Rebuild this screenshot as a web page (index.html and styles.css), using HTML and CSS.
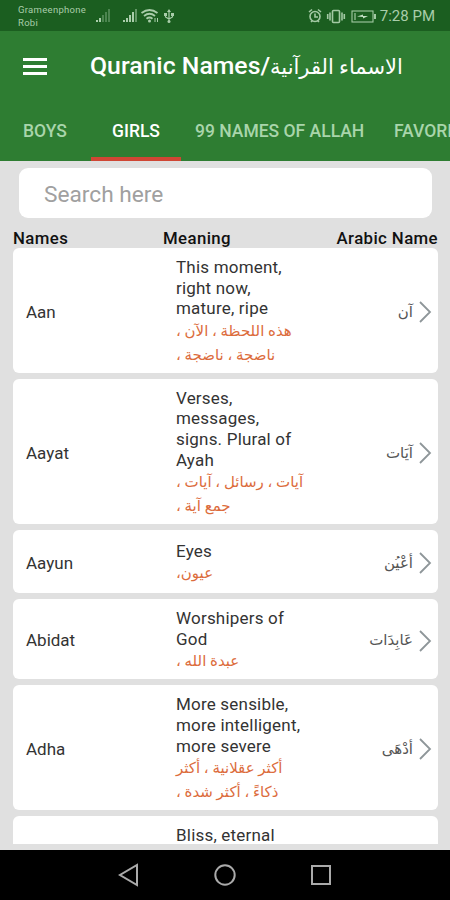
FILE: index.html
```html
<!DOCTYPE html>
<html lang="en">
<head>
    <meta charset="UTF-8">
    <meta name="viewport" content="width=device-width, initial-scale=1.0">
    <title>Quranic Names</title>
    <link rel="stylesheet" href="styles.css">
</head>
<body>
    <div class="status-bar">
        <div class="carrier">Grameenphone<br>Robi</div>
        <svg class="status-left" width="80" height="16" viewBox="0 0 80 16">
            <g fill="#a9cdaa">
                <rect x="1" y="12" width="2" height="2"/>
                <rect x="4" y="10" width="2" height="4"/>
                <g opacity="0.35">
                    <rect x="7" y="7" width="2" height="7"/>
                    <rect x="10" y="4" width="2" height="10"/>
                    <rect x="13" y="1" width="2" height="13"/>
                </g>
                <rect x="28" y="12" width="2" height="2"/>
                <rect x="31" y="10" width="2" height="4"/>
                <rect x="34" y="7" width="2" height="7"/>
                <rect x="37" y="4" width="2" height="10"/>
                <rect x="40" y="1" width="2" height="13" opacity="0.5"/>
                <circle cx="54.500" cy="13" r="1.500"/>
                <circle cx="74" cy="13.500" r="1.500"/>
                <path d="M72 4l2-3 2 3zM69 5h3v3h-3zM76 5h3v3h-3z"/>
            </g>
            <g fill="none" stroke="#a9cdaa" stroke-width="1.800">
                <path d="M46.500 5q8-6 16 0M49 8q5.500-4.500 11 0M51.500 10.800q3-2.500 6 0"/>
                <path d="M60 10v4M62.500 10v4" stroke-width="1"/>
                <path d="M74 3v10M70.500 7v2l3.500 2 3.500-2V7" stroke-width="1.200"/>
            </g>
        </svg>
        <svg class="status-right" width="70" height="16" viewBox="0 0 70 16" fill="none" stroke="#a3c9a4" stroke-width="1.600">
            <circle cx="8" cy="8.500" r="5"/>
            <path d="M8 5.500V9h3M2 4l3-2.500M14 4l-3-2.500M4 14l1.500-1.500M12 14l-1.500-1.500"/>
            <rect x="25.500" y="2.500" width="7" height="12" rx="1"/>
            <path d="M23 4.500v8M35 4.500v8M20.700 6v5M37.300 6v5"/>
            <rect x="45" y="3" width="21" height="11" stroke-width="1.100"/>
            <path d="M68 6v5" stroke-width="2"/>
            <path d="M47 5h2v7h-2z" fill="#a3c9a4" stroke="none" opacity="0.6"/>
            <path d="M50 8.500l6-2v1.500h5l-5 2.500V9z" fill="#c3dfc4" stroke="none"/>
        </svg>
        <div class="clock">7:28 PM</div>
    </div>
    <div class="toolbar">
        <svg class="menu-icon" width="24" height="17" viewBox="0 0 24 17" fill="#fff">
            <path d="M0 0h24v3H0zM0 7h24v3H0zM0 14h24v3H0z"/>
        </svg>
        <h1>Quranic Names/<span class="title-ar" lang="ar" dir="rtl">الاسماء القرآنية</span></h1>
    </div>
    <div class="tabs">
        <div class="tab tab-boys">BOYS</div>
        <div class="tab tab-girls active">GIRLS</div>
        <div class="tab tab-allah">99 NAMES OF ALLAH</div>
        <div class="tab">FAVORITES</div>
    </div>
    <div class="content">
        <input class="search" type="text" placeholder="Search here">
        <div class="list-header">
            <span class="col-names">Names</span>
            <span class="col-meaning">Meaning</span>
            <span class="col-arabic">Arabic Name</span>
        </div>
        <div class="list">
            <div class="card">
                <div class="name">Aan</div>
                <div class="meaning">
                    <p>This moment,<br>right now,<br>mature, ripe</p>
                    <p class="meaning-ar" lang="ar" dir="rtl">هذه اللحظة ، الآن ،<br>ناضجة ، ناضجة ،</p>
                </div>
                <div class="arabic" lang="ar" dir="rtl">آن</div>
                <svg class="arrow" width="13" height="22" viewBox="0 0 13 22"><path d="M1 1l10 10L1 21"/></svg>
            </div>
            <div class="card">
                <div class="name">Aayat</div>
                <div class="meaning">
                    <p>Verses,<br>messages,<br>signs. Plural of<br>Ayah</p>
                    <p class="meaning-ar" lang="ar" dir="rtl">آيات ، رسائل ، آيات ،<br>جمع آية ،</p>
                </div>
                <div class="arabic" lang="ar" dir="rtl">آيَات</div>
                <svg class="arrow" width="13" height="22" viewBox="0 0 13 22"><path d="M1 1l10 10L1 21"/></svg>
            </div>
            <div class="card card-single">
                <div class="name">Aayun</div>
                <div class="meaning">
                    <p>Eyes</p>
                    <p class="meaning-ar" lang="ar" dir="rtl">عيون،</p>
                </div>
                <div class="arabic" lang="ar" dir="rtl">أعْيُن</div>
                <svg class="arrow" width="13" height="22" viewBox="0 0 13 22"><path d="M1 1l10 10L1 21"/></svg>
            </div>
            <div class="card">
                <div class="name">Abidat</div>
                <div class="meaning">
                    <p>Worshipers of<br>God</p>
                    <p class="meaning-ar" lang="ar" dir="rtl">عبدة الله ،</p>
                </div>
                <div class="arabic" lang="ar" dir="rtl">عَابِدَات</div>
                <svg class="arrow" width="13" height="22" viewBox="0 0 13 22"><path d="M1 1l10 10L1 21"/></svg>
            </div>
            <div class="card">
                <div class="name">Adha</div>
                <div class="meaning">
                    <p>More sensible,<br>more intelligent,<br>more severe</p>
                    <p class="meaning-ar" lang="ar" dir="rtl">أكثر عقلانية ، أكثر<br>ذكاءً ، أكثر شدة ،</p>
                </div>
                <div class="arabic" lang="ar" dir="rtl">أدْهَى</div>
                <svg class="arrow" width="13" height="22" viewBox="0 0 13 22"><path d="M1 1l10 10L1 21"/></svg>
            </div>
            <div class="card card-cut">
                <div class="name"></div>
                <div class="meaning">
                    <p>Bliss, eternal</p>
                </div>
            </div>
        </div>
    </div>
    <div class="nav-bar">
        <svg width="22" height="24" viewBox="0 0 22 24"><path d="M19 2v20L2 12z"/></svg>
        <svg width="24" height="24" viewBox="0 0 24 24"><circle cx="12" cy="12" r="9.700"/></svg>
        <svg width="22" height="24" viewBox="0 0 22 24"><path d="M2 3h18v18H2z"/></svg>
    </div>
</body>
</html>
```
FILE: styles.css
```css
* {
    box-sizing: border-box;
}

body {
    margin: 0;
    width: 450px;
    height: 900px;
    overflow: hidden;
    display: flex;
    flex-direction: column;
    background: #e0e0e0;
    font-family: Roboto, "DejaVu Sans", sans-serif;
}

h1, p {
    margin: 0;
}

.status-bar {
    height: 31px;
    flex: none;
    display: flex;
    align-items: center;
    padding: 0 15px 0 18px;
    background: #1b5e20;
    color: #a9cdaa;
}

.carrier {
    width: 77px;
    font-size: 9.5px;
    line-height: 13px;
    letter-spacing: 0.3px;
}

.status-right {
    margin-left: auto;
}

.clock {
    width: 58px;
    text-align: right;
    font-size: 15px;
    white-space: nowrap;
}

.toolbar {
    height: 70px;
    flex: none;
    display: flex;
    align-items: center;
    padding: 0 23px;
    background: #2e7d32;
    color: #fff;
}

.menu-icon {
    margin-right: 43px;
}

h1 {
    padding-top: 1px;
    font-size: 24.8px;
    font-weight: 500;
    line-height: 32px;
    white-space: nowrap;
}

.title-ar {
    font-size: 21px;
    font-weight: 400;
}

.tabs {
    height: 60px;
    flex: none;
    display: flex;
    background: #2e7d32;
    color: #a9d5ab;
    font-size: 17.5px;
    font-weight: 500;
    line-height: 60px;
    white-space: nowrap;
    overflow: hidden;
}

.tab {
    padding-left: 14px;
    flex: none;
}

.tab-boys {
    width: 91px;
    padding-left: 23px;
}

.tab-girls {
    width: 90px;
    padding-left: 0;
    text-align: center;
}

.tab-allah {
    width: 199px;
}

.tab.active {
    color: #fff;
    border-bottom: 4px solid #cf4634;
}

.content {
    flex: 1;
    min-height: 0;
    display: flex;
    flex-direction: column;
    padding: 7px 12px 6px 13px;
    overflow: hidden;
}

.search {
    height: 50px;
    flex: none;
    margin: 0 6px;
    padding: 2px 25px 0;
    border: none;
    border-radius: 9px;
    background: #fff;
    font-family: inherit;
    font-size: 22.7px;
    font-weight: 400;
}

.search::placeholder {
    color: #a0a0a0;
}

.list-header {
    height: 30px;
    flex: none;
    display: flex;
    padding-top: 10px;
    font-size: 16.8px;
    font-weight: 500;
    line-height: 20px;
    letter-spacing: 0.4px;
    color: #111;
}

.col-names {
    width: 150px;
}

.col-arabic {
    margin-left: auto;
}

.list {
    flex: 1;
    min-height: 0;
    display: flex;
    flex-direction: column;
    gap: 6px;
    overflow: hidden;
}

.card {
    flex: none;
    display: flex;
    align-items: center;
    padding: 9px 6px 6px 13px;
    border-radius: 6px;
    background: #fff;
    color: #333;
    font-size: 17px;
    line-height: 20.6px;
}

.card-single {
    height: 63px;
}

.card-cut {
    height: 60px;
    align-items: flex-start;
}

.name {
    width: 150px;
}

.meaning {
    white-space: nowrap;
    letter-spacing: 0.2px;
}

.meaning-ar {
    color: #dc6c3c;
    font-size: 15px;
    line-height: 24px;
    letter-spacing: 0;
    text-align: left;
}

.arabic {
    margin-left: auto;
    font-size: 15px;
    color: #555;
}

.arrow {
    margin-left: 6px;
    fill: none;
    stroke: #8e9699;
    stroke-width: 1.8;
}

.nav-bar {
    height: 50px;
    flex: none;
    display: flex;
    justify-content: center;
    align-items: center;
    gap: 73px;
    background: #000;
}

.nav-bar svg {
    fill: none;
    stroke: #aaa;
    stroke-width: 2;
}
```
